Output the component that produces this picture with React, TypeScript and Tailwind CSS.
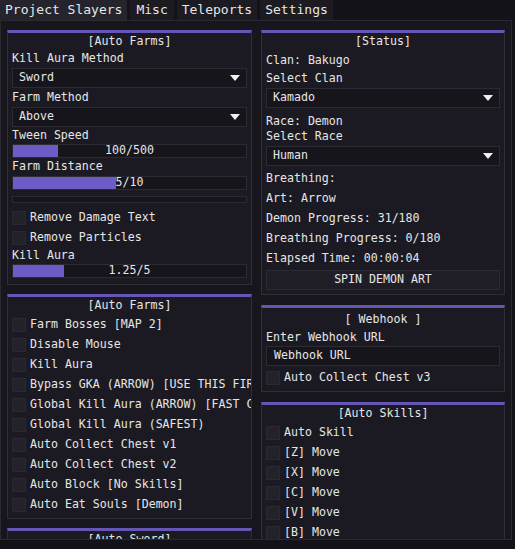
const mono = "font-['DejaVu_Sans_Mono','Liberation_Mono',monospace]";

const Panel = ({
  title,
  head,
  className,
  children,
}: {
  title: string;
  head?: string;
  className?: string;
  children?: React.ReactNode;
}) => {
  return (
    <div className={"w-full shrink-0 overflow-hidden border border-[#2f2e38] border-t-[3px] border-t-[#6555b4] bg-[#1b1a22] px-1 " + (className ?? "")}>
      <div className={"flex items-center justify-center whitespace-pre " + (head ?? "h-[18px]")}>{title}</div>
      {children}
    </div>
  );
};

const Label = ({ text, h }: { text: string; h: string }) => (
  <div className={"flex items-center whitespace-nowrap " + h}>{text}</div>
);

const Dropdown = ({ value }: { value: string }) => (
  <div className="flex h-[20px] items-center justify-between border border-[#2c2b34] bg-[#16151c] pl-[6px] pr-[6px]">
    <span>{value}</span>
    <svg width="10" height="6" viewBox="0 0 10 6">
      <path d="M0 0 L10 0 L5 6 Z" fill="#f0f0f0" />
    </svg>
  </div>
);

const Slider = ({ value, fill }: { value: string; fill: string }) => (
  <div className="relative h-[14px] border border-[#2c2b34] bg-[#16151c]">
    <div className={"h-full bg-[#6e5cc6] " + fill} />
    <div className="absolute inset-0 flex items-center justify-center leading-none">{value}</div>
  </div>
);

const Check = ({ text, className }: { text: string; className?: string }) => (
  <div className={"flex h-[20px] items-center gap-[4px] whitespace-nowrap " + (className ?? "")}>
    <div className="h-[14px] w-[14px] shrink-0 border border-[#2a2932] bg-[#23222a]" />
    <span>{text}</span>
  </div>
);

export default function App() {
  return (
    <div className={"h-[549px] w-[515px] overflow-hidden bg-[#131218] text-[11.6px] text-[#e6e6e6] " + mono}>
      {/* tabs */}
      <div className="flex h-[20px] gap-[3px] text-[13px]">
        <div className="flex items-center bg-[#25242d] px-[5px]">Project Slayers</div>
        <div className="flex items-center bg-[#1c1b22] px-[6px]">Misc</div>
        <div className="flex items-center bg-[#1c1b22] px-[5px]">Teleports</div>
        <div className="flex items-center bg-[#1c1b22] px-[5px]">Settings</div>
      </div>

      {/* content */}
      <div className="flex h-[520px] w-[512px] gap-[9px] overflow-hidden border border-[#2a2932] bg-[#17161d] pl-[6px] pt-[9px]">
        {/* left column */}
        <div className="flex w-[245px] shrink-0 flex-col gap-[9px]">
          <Panel title="[Auto Farms]" className="pb-[6px]">
            <Label text="Kill Aura Method" h="h-[15px]" />
            <div className="mt-[2px]">
              <Dropdown value="Sword" />
            </div>
            <Label text="Farm Method" h="h-[19px]" />
            <Dropdown value="Above" />
            <Label text="Tween Speed" h="h-[17px]" />
            <Slider value="100/500" fill="w-[45px]" />
            <Label text="Farm Distance" h="h-[18px]" />
            <Slider value="5/10" fill="w-[103px]" />
            <div className="mt-[6px] h-[7px] border border-[#2c2b34] bg-[#16151c]" />
            <div className="mt-[5px]">
              <Check text="Remove Damage Text" />
              <Check text="Remove Particles" />
            </div>
            <Label text="Kill Aura" h="h-[16px]" />
            <Slider value="1.25/5" fill="w-[51px]" />
          </Panel>

          <Panel title="[Auto Farms]" className="pb-[3px]">
            <Check text="Farm Bosses [MAP 2]" />
            <Check text="Disable Mouse" />
            <Check text="Kill Aura" />
            <Check text="Bypass GKA (ARROW) [USE THIS FIRST]" />
            <Check text="Global Kill Aura (ARROW) [FAST CHEST]" />
            <Check text="Global Kill Aura (SAFEST)" />
            <Check text="Auto Collect Chest v1" />
            <Check text="Auto Collect Chest v2" />
            <Check text="Auto Block [No Skills]" />
            <Check text="Auto Eat Souls [Demon]" />
          </Panel>

          <Panel title="[Auto Sword]" className="h-[40px]" />
        </div>

        {/* right column */}
        <div className="flex w-[244px] shrink-0 flex-col gap-[10px]">
          <Panel title="[Status]" className="pb-[4px]">
            <Label text="Clan: Bakugo" h="h-[20px]" />
            <Label text="Select Clan" h="h-[16px]" />
            <div className="mt-[1px]">
              <Dropdown value="Kamado" />
            </div>
            <Label text="Race: Demon" h="h-[15px] mt-[6px]" />
            <Label text="Select Race" h="h-[15px]" />
            <div className="mt-[2px]">
              <Dropdown value="Human" />
            </div>
            <div className="mt-[3px]">
              <Label text="Breathing:" h="h-[20px]" />
              <Label text="Art: Arrow" h="h-[20px]" />
              <Label text="Demon Progress: 31/180" h="h-[20px]" />
              <Label text="Breathing Progress: 0/180" h="h-[20px]" />
              <Label text="Elapsed Time: 00:00:04" h="h-[20px]" />
            </div>
            <div className="mt-[1px] flex h-[20px] items-center justify-center border border-[#2c2b34] bg-[#1f1e26]">
              SPIN DEMON ART
            </div>
          </Panel>

          <Panel title="[ Webhook ]" head="h-[22px] pt-[2px]" className="pb-[3px]">
            <Label text="Enter Webhook URL" h="h-[16px]" />
            <div className="flex h-[20px] items-center border border-[#2c2b34] bg-[#16151c] pl-[7px]">Webhook URL</div>
            <Check text="Auto Collect Chest v3" className="mt-[2px]" />
          </Panel>

          <Panel title="[Auto Skills]" className="grow">
            <Check text="Auto Skill" />
            <Check text="[Z] Move" />
            <Check text="[X] Move" />
            <Check text="[C] Move" />
            <Check text="[V] Move" />
            <Check text="[B] Move" />
          </Panel>
        </div>
      </div>
    </div>
  );
}
